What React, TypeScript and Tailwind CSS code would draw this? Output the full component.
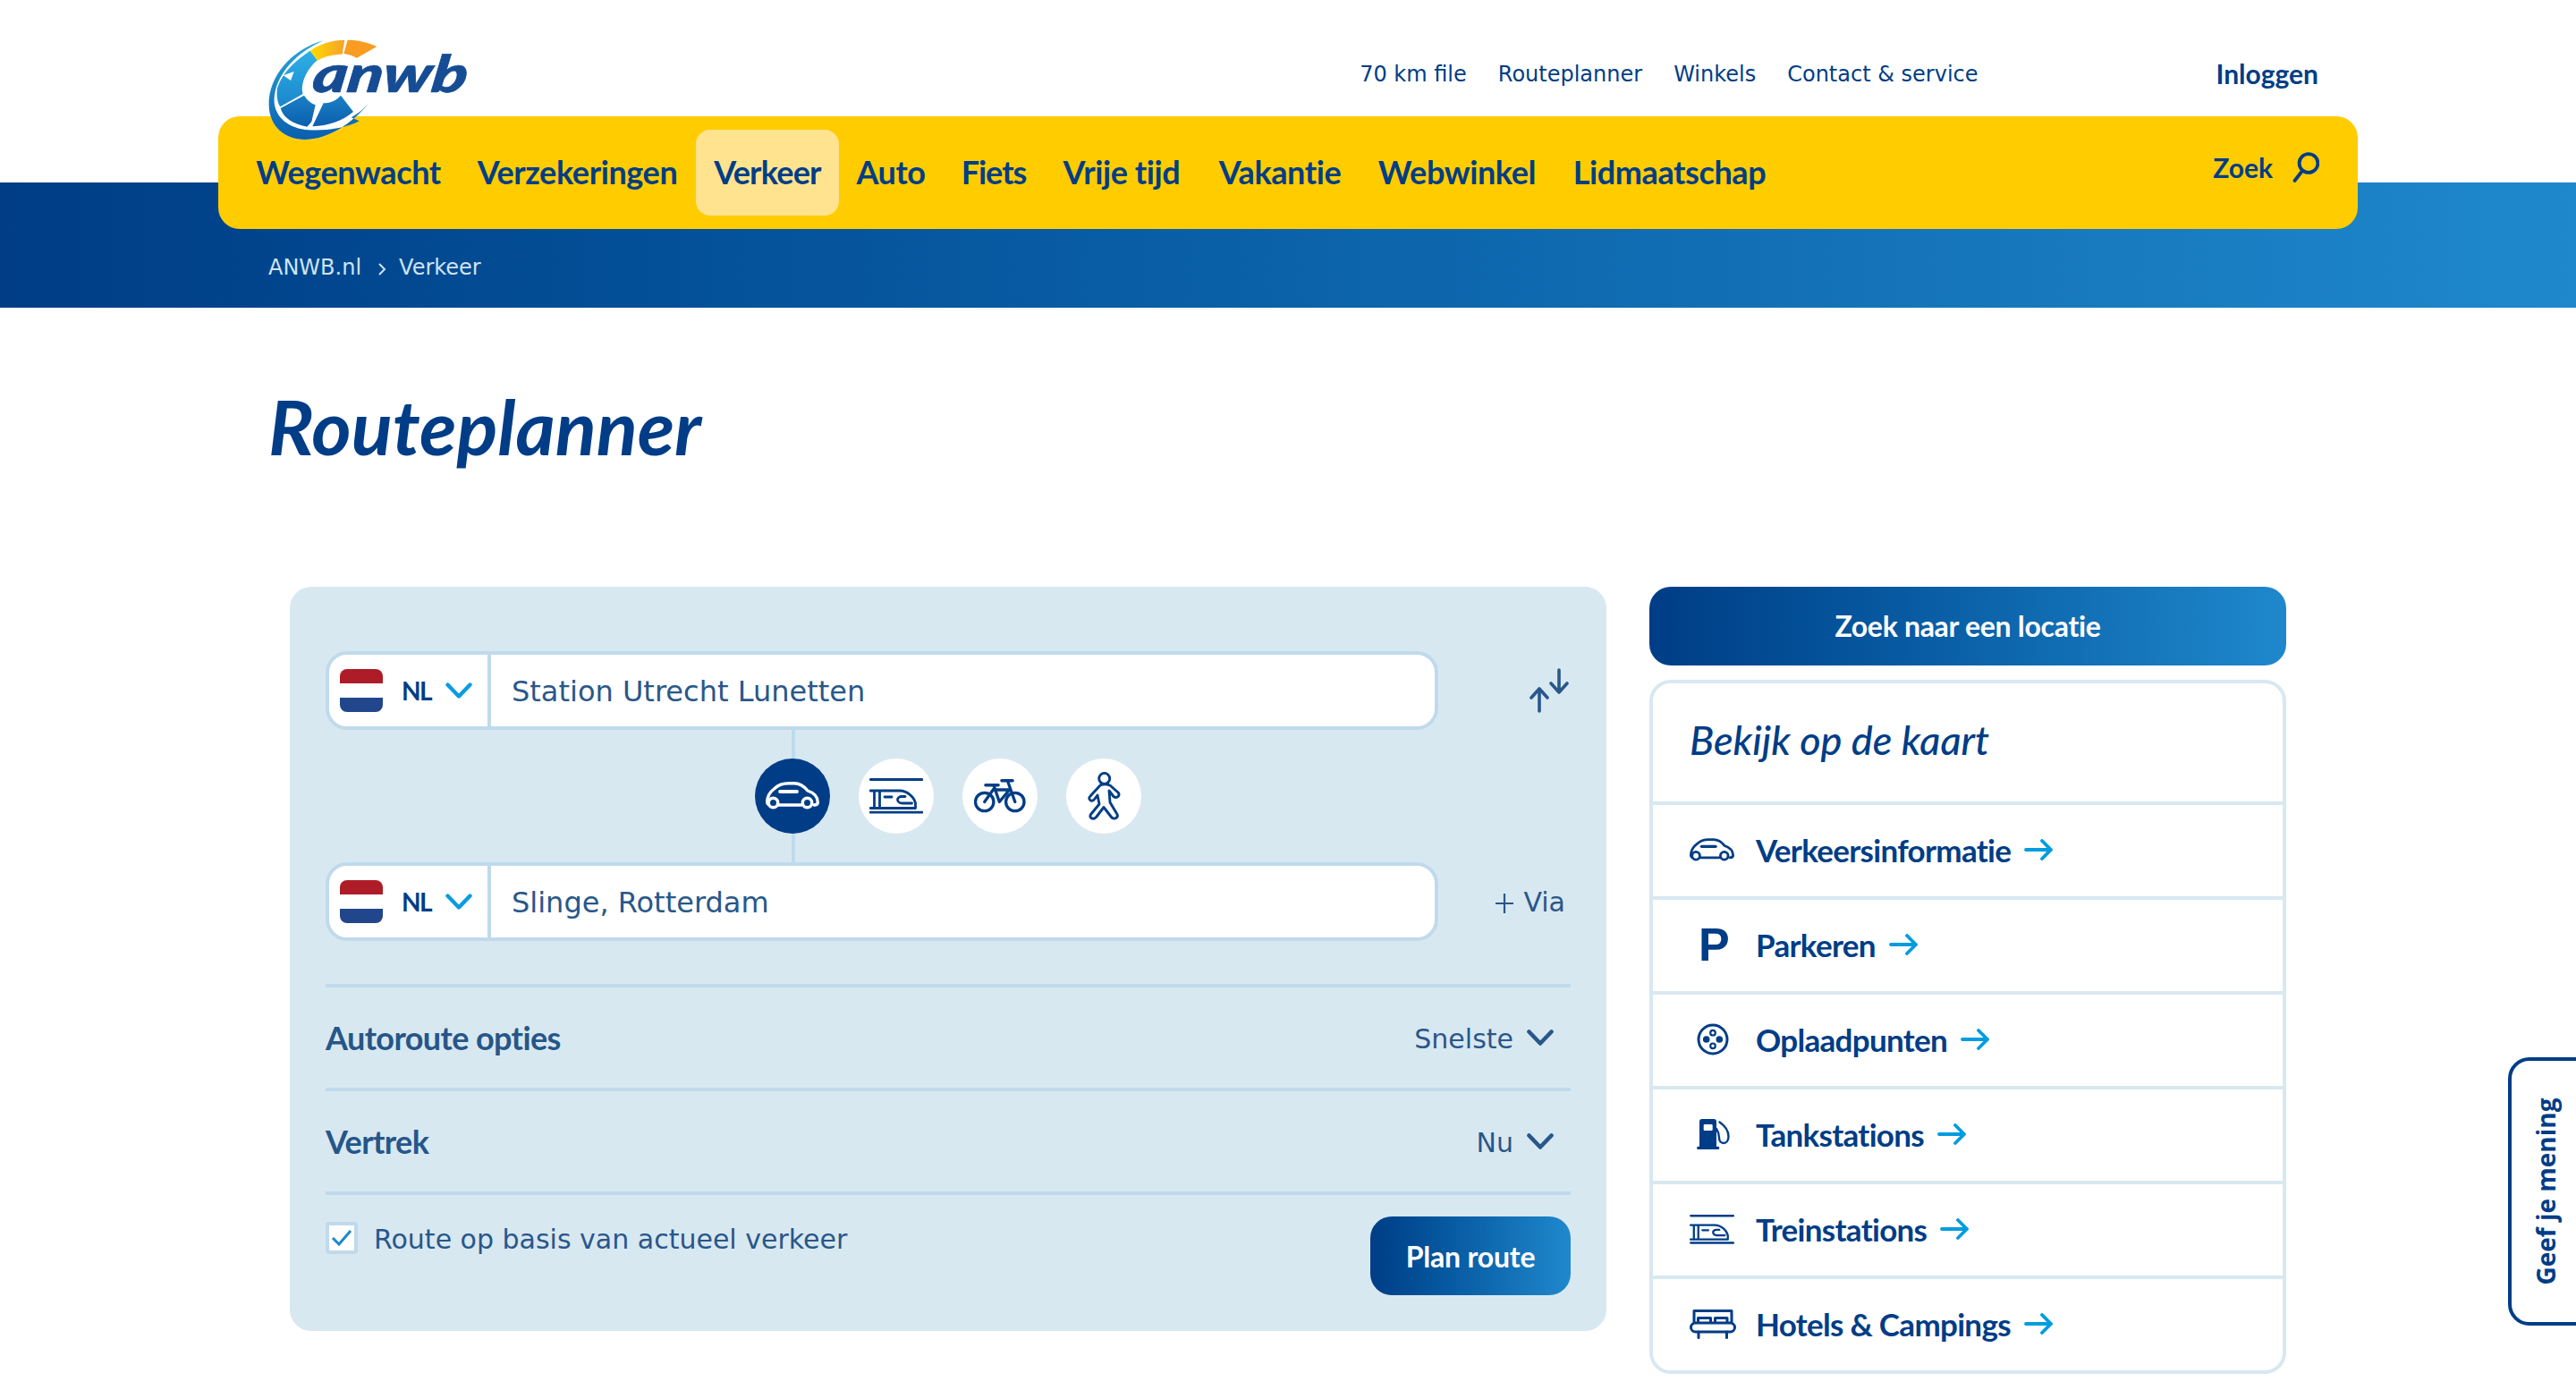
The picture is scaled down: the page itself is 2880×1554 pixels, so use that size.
import React from "react";

const brand = "font-['Lato','Noto_Sans',sans-serif]";
const plain = "font-['DejaVu_Sans',sans-serif]";

function Logo() {
  return (
    <svg viewBox="0 0 810 420" className="absolute left-[280px] top-[30px] z-20 w-[270px] h-[140px]">
      <defs>
        <linearGradient id="cres" x1="0" y1="0" x2="0" y2="1">
          <stop offset="0" stopColor="#2aa6dc" />
          <stop offset="1" stopColor="#0a5fae" />
        </linearGradient>
        <linearGradient id="sky" x1="0" y1="0" x2="0" y2="1">
          <stop offset="0" stopColor="#2fb0e6" />
          <stop offset="1" stopColor="#1a86cb" />
        </linearGradient>
        <linearGradient id="low" x1="0" y1="0" x2="0" y2="1">
          <stop offset="0" stopColor="#1a80c6" />
          <stop offset="1" stopColor="#0c5fae" />
        </linearGradient>
        <linearGradient id="sun" x1="0" y1="0" x2="1" y2="0">
          <stop offset="0" stopColor="#ffdc00" />
          <stop offset="1" stopColor="#f7a12a" />
        </linearGradient>
      </defs>
      <path d="M245 46C140 75 60 165 62 262C63 335 115 378 182 378C262 378 340 325 398 256L300 100Z" fill="#fff" />
      <path d="M245 46C140 75 60 165 62 262C63 335 115 378 182 378C262 378 340 325 398 256C375 282 352 296 338 304L365 316C320 340 250 350 195 346C130 342 85 305 80 255C76 180 135 95 245 46Z" fill="url(#cres)" />
      <path d="M200 80C155 110 108 150 90 205C87 230 90 255 100 268L176 225C166 190 190 140 225 112Z" fill="url(#sky)" />
      <path d="M110 163L146 150L135 180Z" fill="#fff" />
      <path d="M101 273L180 230C190 245 200 255 218 262L205 318L190 335C140 325 110 305 101 273Z" fill="url(#low)" />
      <path d="M208 334L245 256C270 256 290 245 303 230L345 285C310 315 260 332 208 334Z" fill="url(#low)" />
      <path d="M200 80C235 55 275 45 316 44L308 92C280 92 250 98 225 113Z" fill="url(#sun)" />
      <path d="M326 44C360 44 395 52 424 66L356 105C345 98 330 92 313 90Z" fill="#f99c20" />
      <text transform="translate(204 218) skewX(-8)" fontFamily="Lato, sans-serif" fontWeight="900" fontStyle="italic" fontSize="172" textLength="518" lengthAdjust="spacingAndGlyphs" fill="#154c94" stroke="#154c94" strokeWidth="2">anwb</text>
    </svg>
  );
}

function Car({ className = "", color = "#003d86" }: { className?: string; color?: string }) {
  return (
    <svg viewBox="0 0 60 32" className={className} fill="none" stroke={color} strokeWidth="3.4" strokeLinecap="round" strokeLinejoin="round">
      <path d="M3 25.5C2 25 1.7 24 1.7 22.5C1.7 15 6 10.5 10 7.5C14 3.5 20 1.7 26 1.7H32C38 1.7 43 5 47 10C53 12 58.3 15 58.3 23C58.3 25 57 26 54 26" />
      <path d="M14 26H40" />
      <circle cx="8.5" cy="23.5" r="5.2" />
      <circle cx="46.5" cy="23.5" r="5.2" />
      <path d="M16 11H35" strokeWidth="3.8" />
    </svg>
  );
}

function Train({ className = "" }: { className?: string }) {
  return (
    <svg viewBox="0 0 60 40" className={className} fill="none" stroke="#003d86" strokeWidth="2.8" strokeLinecap="round" strokeLinejoin="round">
      <path d="M1.2 1.5H59M1.2 38.2H59" />
      <path d="M1 14H34C42 14 50 21 51.5 28V33.5H1" />
      <path d="M5.5 15V33M11.5 15V33" />
      <path d="M17 21H25" />
      <path d="M47.5 28H37C33.5 28 31.5 26 31.5 24C31.5 22 33.5 20.5 36 20.5H40" />
    </svg>
  );
}

function Bike({ className = "" }: { className?: string }) {
  return (
    <svg viewBox="0 0 58 38" className={className} fill="none" stroke="#003d86" strokeWidth="3.3" strokeLinecap="round" strokeLinejoin="round">
      <circle cx="11.7" cy="25.5" r="10.2" />
      <circle cx="45.8" cy="25.5" r="10.2" />
      <path d="M11.7 25.5L22 11M22 7L28.3 25.5L39.5 12M22.5 12H39" />
      <path d="M37.5 2L45.8 25.5" />
      <path d="M13 6.8H27M31 1.8H43" strokeWidth="3.6" />
    </svg>
  );
}

function Walker({ className = "" }: { className?: string }) {
  return (
    <svg viewBox="0 0 37 54" className={className} fill="none" stroke="#003d86" strokeWidth="2.9" strokeLinejoin="round" strokeLinecap="round">
      <circle cx="18.7" cy="7.4" r="6" />
      <path d="M14 15L3 27C1 29 1.5 31 3.5 32C5.5 33 7 31.5 8 30L11 26L13 36L3.5 47.5C2 50 3.5 52 6 52.3C8 52.5 9 51 10 50L18 39.5L26.5 50.5C28 52.5 30.5 52.5 32.5 51C34 49.5 33.5 48 32.5 46.5L25 34L24 21L29 27.5C31 29 33 28.5 34.5 27C35.5 25 35 23.5 33.5 22.5L25 15C21 13.5 17 13.5 14 15Z" />
    </svg>
  );
}

function Charger({ className = "" }: { className?: string }) {
  return (
    <svg viewBox="0 0 36 36" className={className} fill="none" stroke="#003d86">
      <circle cx="18" cy="18" r="16" strokeWidth="3" />
      <circle cx="18" cy="10.7" r="2.8" strokeWidth="2.2" />
      <circle cx="18" cy="25.3" r="2.8" strokeWidth="2.2" />
      <circle cx="10.7" cy="18" r="3.8" fill="#003d86" stroke="none" />
      <circle cx="25.3" cy="18" r="3.8" fill="#003d86" stroke="none" />
    </svg>
  );
}

function Fuel({ className = "" }: { className?: string }) {
  return (
    <svg viewBox="0 0 37 36" className={className}>
      <path fillRule="evenodd" d="M6 1H19C21 1 22 2 22 4V33H3V4C3 2 4 1 6 1ZM9 7C8.3 7 7.7 7.6 7.7 8.3V12.7C7.7 13.4 8.3 14 9 14H16.4C17.1 14 17.7 13.4 17.7 12.7V8.3C17.7 7.6 17.1 7 16.4 7Z" fill="#003d86" />
      <rect x="0" y="31.7" width="25.3" height="3.4" rx="1.7" fill="#003d86" />
      <path d="M25.5 4.5C32 9 35.5 15 35.5 20.5C35.5 25.5 33 28 30 28C27 28 25 25.5 25 22C25 18 24 15 22 12" fill="none" stroke="#003d86" strokeWidth="2.4" strokeLinecap="round" />
    </svg>
  );
}

function Bed({ className = "" }: { className?: string }) {
  return (
    <svg viewBox="0 0 52 34" className={className} fill="none" stroke="#003d86" strokeWidth="3" strokeLinecap="round" strokeLinejoin="round">
      <path d="M5 15V2.5H47V15" />
      <path d="M9.5 15V10.5H23.5V15M28.5 15V10.5H42V15" />
      <rect x="1.5" y="16" width="49" height="10" rx="5" />
      <path d="M10 26V32.5M41.5 26V32.5" />
    </svg>
  );
}

function Chevron({ className = "", color, width = 4.4 }: { className?: string; color: string; width?: number }) {
  return (
    <svg viewBox="0 0 30 18" className={className} fill="none" stroke={color} strokeWidth={width} strokeLinecap="round" strokeLinejoin="round">
      <path d="M2.5 2.5L15 15.5L27.5 2.5" />
    </svg>
  );
}

function Arrow() {
  return (
    <svg viewBox="0 0 32 24" className="w-[32px] h-[24px] ml-[15px]" fill="none" stroke="#009ce0" strokeWidth="3.8" strokeLinecap="round" strokeLinejoin="round">
      <path d="M2 12H30M20 2L30 12L20 22" />
    </svg>
  );
}

function Flag() {
  return (
    <span className="flex flex-col w-[48px] h-[48px] rounded-lg overflow-hidden">
      <span className="h-[16px] bg-[#ae1c28]" />
      <span className="h-[16px] bg-white" />
      <span className="h-[16px] bg-[#21468b]" />
    </span>
  );
}

function LocationInput({ value }: { value: string }) {
  return (
    <div className="flex w-[1244px] h-[88px] rounded-3xl border-4 border-[#c0daec] bg-white overflow-hidden">
      <div className="flex items-center w-[181px] shrink-0 border-r-4 border-[#c0daec] pl-[12px]">
        <Flag />
        <span className={`${brand} ml-[21px] w-[33px] text-[28px] tracking-[-1.5px] leading-none font-bold text-[#003d86]`}>NL</span>
        <Chevron className="ml-[16px] w-[30px] h-[18px]" color="#0a9ce0" />
      </div>
      <div className={`${plain} flex items-center pl-[23px] pt-[2px] text-[32px] text-[#29578a]`}>{value}</div>
    </div>
  );
}

function OptionRow({ label, value }: { label: string; value: string }) {
  return (
    <div className="flex items-center justify-between h-[116px] border-t-4 border-[#c0daec] pr-[19px]">
      <span className={`${brand} text-[36px] tracking-[-0.6px] font-bold text-[#265688]`}>{label}</span>
      <span className="flex items-center">
        <span className={`${plain} pt-[2px] text-[30px] text-[#29578a]`}>{value}</span>
        <Chevron className="ml-[15px] w-[30px] h-[18px]" color="#29578a" width={4.6} />
      </span>
    </div>
  );
}

const rows: [string, React.ReactNode][] = [
  ["Verkeersinformatie", <Car className="w-[50px] h-[27px]" />],
  ["Parkeren", <span className="block pl-[10px] font-['Liberation_Sans',sans-serif] text-[52px] leading-none font-bold text-[#003d86]">P</span>],
  ["Oplaadpunten", <Charger className="ml-[8px] w-[36px] h-[36px]" />],
  ["Tankstations", <Fuel className="ml-[8px] w-[37px] h-[36px]" />],
  ["Treinstations", <Train className="w-[50px] h-[33px]" />],
  ["Hotels & Campings", <Bed className="w-[52px] h-[34px]" />],
];

const navItems: [string, string][] = [
  ["Wegenwacht", "w-[247px]"],
  ["Verzekeringen", "w-[265px]"],
  ["Verkeer", "w-[160px] tracking-[-0.8px] bg-[#ffe38f]"],
  ["Auto", "w-[116px]"],
  ["Fiets", "w-[114px] tracking-[-1px]"],
  ["Vrije tijd", "w-[172px]"],
  ["Vakantie", "w-[182px]"],
  ["Webwinkel", "w-[214px]"],
  ["Lidmaatschap", "w-[261px]"],
];

export default function App() {
  return (
    <div className="relative w-full h-[1554px] overflow-hidden bg-white">
      <Logo />
      <header>
        <div className={`${plain} flex items-center justify-end h-[130px] w-[2392px] ml-[244px] pr-[44px] pt-[36px] text-[#003d86]`}>
          <nav className="flex gap-[35px] text-[24px]">
            <span>70 km file</span>
            <span>Routeplanner</span>
            <span>Winkels</span>
            <span>Contact &amp; service</span>
          </nav>
          <span className={`${brand} ml-[266px] mb-[2px] text-[30px] font-bold`}>Inloggen</span>
        </div>
        <div className={`${brand} relative z-10 flex items-center justify-between w-[2392px] h-[126px] -mb-[52px] ml-[244px] pl-[22px] pr-[43px] bg-[#ffcc00] rounded-3xl text-[#003d86]`}>
          <nav className="flex items-center text-[36px] tracking-[-0.4px] font-bold">
            {navItems.map(([n, cls]) => (
              <span key={n} className={`flex items-center justify-center h-[96px] pb-[3px] rounded-2xl ${cls}`}>{n}</span>
            ))}
          </nav>
          <div className="flex items-center gap-[22px] pb-[12px]">
            <span className="text-[30px] font-bold">Zoek</span>
            <svg viewBox="0 0 30 34" className="w-[30px] h-[34px]" fill="none" stroke="#003d86" strokeWidth="3.8" strokeLinecap="round">
              <circle cx="18" cy="12.5" r="10.4" />
              <path d="M11 21L2.5 32" />
            </svg>
          </div>
        </div>
        <div className="h-[140px] pt-[52px] bg-gradient-to-r from-[#003d86] to-[#1f88cc]">
          <div className={`${plain} flex items-center h-[86px] pl-[300px] text-[24px] text-[#cfe3f2]`}>
            <span>ANWB.nl</span>
            <svg viewBox="0 0 10 16" className="ml-[18px] mr-[14px] w-[10px] h-[16px] mt-[3px]" fill="none" stroke="#cfe3f2" strokeWidth="2"><path d="M2 2L8 8L2 14" /></svg>
            <span>Verkeer</span>
          </div>
        </div>
      </header>

      <div className="h-[312px] pt-[88px] pl-[300px]">
        <h1 className={`${brand} text-[85px] leading-[88px] font-bold italic text-[#003d86]`}>Routeplanner</h1>
      </div>

      <main className="flex gap-[48px] ml-[324px]">
        <section className="w-[1472px] h-[832px] pt-[72px] px-[40px] rounded-3xl bg-[#d8e8f1]">
          <div className="flex items-center justify-between">
            <LocationInput value="Station Utrecht Lunetten" />
            <svg viewBox="0 0 46 50" className="mr-[1px] w-[46px] h-[50px]" fill="none" stroke="#29578a" strokeWidth="3.6" strokeLinecap="round" strokeLinejoin="round">
              <path d="M12 48V23M3 33L12 23L21 33M34 2V27M25 17L34 27L43 17" />
            </svg>
          </div>
          <div className="relative flex items-center gap-[32px] h-[148px] pl-[480px]">
            <div className="absolute left-[521px] top-0 w-[4px] h-[148px] bg-[#c0daec]" />
            <span className="relative flex items-center justify-center w-[84px] h-[84px] rounded-full bg-[#003d86]"><Car className="w-[60px] h-[32px]" color="#ffffff" /></span>
            <span className="relative flex items-center justify-center w-[84px] h-[84px] rounded-full bg-white"><Train className="w-[60px] h-[40px]" /></span>
            <span className="relative flex items-center justify-center w-[84px] h-[84px] rounded-full bg-white"><Bike className="w-[58px] h-[38px]" /></span>
            <span className="relative flex items-center justify-center w-[84px] h-[84px] rounded-full bg-white"><Walker className="w-[37px] h-[54px]" /></span>
          </div>
          <div className="flex items-center justify-between">
            <LocationInput value="Slinge, Rotterdam" />
            <div className={`${plain} flex items-center gap-[11px] pr-[6px] text-[30px] text-[#29578a]`}>
              <svg viewBox="0 0 20 22" className="w-[20px] h-[22px] mt-[4px]" fill="none" stroke="#29578a" strokeWidth="2.2"><path d="M10 0V22M0 11H20" /></svg>
              <span>Via</span>
            </div>
          </div>
          <div className="mt-[48px]">
            <OptionRow label="Autoroute opties" value="Snelste" />
            <OptionRow label="Vertrek" value="Nu" />
          </div>
          <div className="flex items-start justify-between border-t-4 border-[#c0daec] pt-[24px]">
            <div className="flex items-start mt-[6px]">
              <span className="flex items-center justify-center w-[36px] h-[36px] rounded-[4px] border-4 border-[#c0daec] bg-white">
                <svg viewBox="0 0 24 20" className="w-[24px] h-[20px]" fill="none" stroke="#1f88cc" strokeWidth="3"><path d="M2 10L9 17L22 2" /></svg>
              </span>
              <span className={`${plain} ml-[18px] mt-[2px] text-[30px] leading-[36px] text-[#29578a]`}>Route op basis van actueel verkeer</span>
            </div>
            <button className={`${brand} w-[224px] h-[88px] pt-[2px] rounded-3xl bg-gradient-to-r from-[#003d86] to-[#1f88cc] text-[32px] tracking-[-0.2px] font-bold text-white`}>Plan route</button>
          </div>
        </section>

        <aside className="w-[712px]">
          <button className={`${brand} w-full h-[88px] rounded-3xl bg-gradient-to-r from-[#003d86] to-[#1f88cc] text-[32px] tracking-[-0.3px] font-bold text-white`}>Zoek naar een locatie</button>
          <div className="mt-[16px] h-[776px] rounded-3xl border-4 border-[#d8e8f1]">
            <div className="flex items-center h-[132px] pl-[41px] pb-[4px]">
              <h2 className={`${brand} text-[45px] font-medium italic text-[#003d86]`}>Bekijk op de kaart</h2>
            </div>
            {rows.map(([label, icon]) => (
              <div key={label} className="flex items-center h-[106px] pb-[2px] border-t-4 border-[#d8e8f1] pl-[41px]">
                <span className="flex items-center w-[74px]">{icon}</span>
                <span className={`${brand} text-[35px] tracking-[-0.7px] font-bold text-[#003d86]`}>{label}</span>
                <Arrow />
              </div>
            ))}
          </div>
        </aside>
      </main>

      <div className="absolute left-[2804px] top-[1182px] flex items-center justify-center w-[100px] h-[300px] pr-[16px] rounded-l-3xl border-4 border-[#003d86] bg-white">
        <span className="block font-['Open_Sans',sans-serif] text-[28px] font-bold text-[#003d86] whitespace-nowrap -rotate-90">Geef je mening</span>
      </div>
    </div>
  );
}
